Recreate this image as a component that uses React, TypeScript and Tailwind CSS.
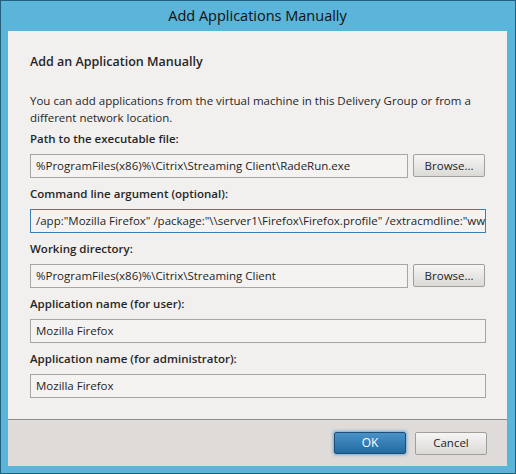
const font = { fontFamily: '"Open Sans", "Noto Sans", sans-serif' };

function Label({ children }: { children: React.ReactNode }) {
  return <div className="text-[11.5px] font-semibold text-[#262626] leading-[16px] mb-[7px]">{children}</div>;
}

function Field({ value, focused, className = '' }: { value: string; focused?: boolean; className?: string }) {
  return (
    <div
      className={`h-[24px] flex items-center px-[5px] overflow-hidden whitespace-nowrap text-[11.5px] text-[#1e1e1e] bg-[#f4f3f2] border ${
        focused ? 'border-[#3d7fb5]' : 'border-[#a9a6a2]'
      } ${className}`}
    >
      {value}
    </div>
  );
}

function Button({ children, primary }: { children: React.ReactNode; primary?: boolean }) {
  if (primary) {
    return (
      <div className="w-[72px] h-[22px] flex items-center justify-center rounded-[2px] border border-[#1d4e78] bg-gradient-to-b from-[#4a93c9] to-[#21699f] text-white text-[12px] shadow-[0_0_3px_1px_rgba(74,150,210,0.7)]">
        {children}
      </div>
    );
  }
  return (
    <div className="w-[72px] h-[23px] flex items-center justify-center rounded-[2px] border border-[#a29f9b] bg-gradient-to-b from-[#f6f5f4] to-[#dcdad7] text-[#1e1e1e] text-[11.5px]">
      {children}
    </div>
  );
}

export default function App() {
  return (
    <div style={font} className="w-[516px] h-[474px] bg-[#5bb4d9] border border-[#23607c] flex flex-col pl-[7px] pr-[8px] pb-[7px]">
      <div className="h-[30px] flex items-center justify-center text-[14.5px] text-[#111] shrink-0">
        Add Applications Manually
      </div>
      <div className="flex-1 flex flex-col bg-[#f1f0ef]">
        <div className="flex-1 px-[22px] pt-[22px]">
          <div className="text-[12.5px] font-semibold text-[#262626] leading-[18px]">Add an Application Manually</div>
          <p className="mt-[21px] text-[11.5px] text-[#262626] leading-[17px] whitespace-nowrap">
            You can add applications from the virtual machine in this Delivery Group or from a
            <br />
            different network location.
          </p>
          <div className="mt-[5px]">
            <Label>Path to the executable file:</Label>
            <div className="flex gap-[5px]">
              <Field className="w-[379px]" value="%ProgramFiles(x86)%\Citrix\Streaming Client\RadeRun.exe" />
              <Button>Browse...</Button>
            </div>
          </div>
          <div className="mt-[8px]">
            <Label>Command line argument (optional):</Label>
            <Field
              focused
              className="w-[456px]"
              value={'/app:"Mozilla Firefox" /package:"\\\\server1\\Firefox\\Firefox.profile" /extracmdline:"www.google.com"'}
            />
          </div>
          <div className="mt-[8px]">
            <Label>Working directory:</Label>
            <div className="flex gap-[5px]">
              <Field className="w-[379px]" value="%ProgramFiles(x86)%\Citrix\Streaming Client" />
              <Button>Browse...</Button>
            </div>
          </div>
          <div className="mt-[8px]">
            <Label>Application name (for user):</Label>
            <Field className="w-[456px]" value="Mozilla Firefox" />
          </div>
          <div className="mt-[8px]">
            <Label>Application name (for administrator):</Label>
            <Field className="w-[456px]" value="Mozilla Firefox" />
          </div>
        </div>
        <div className="h-[47px] shrink-0 border-t border-[#8f8c89] bg-[#dedbd8] flex items-center justify-end gap-[9px] pr-[20px]">
          <Button primary>OK</Button>
          <Button>Cancel</Button>
        </div>
      </div>
    </div>
  );
}
